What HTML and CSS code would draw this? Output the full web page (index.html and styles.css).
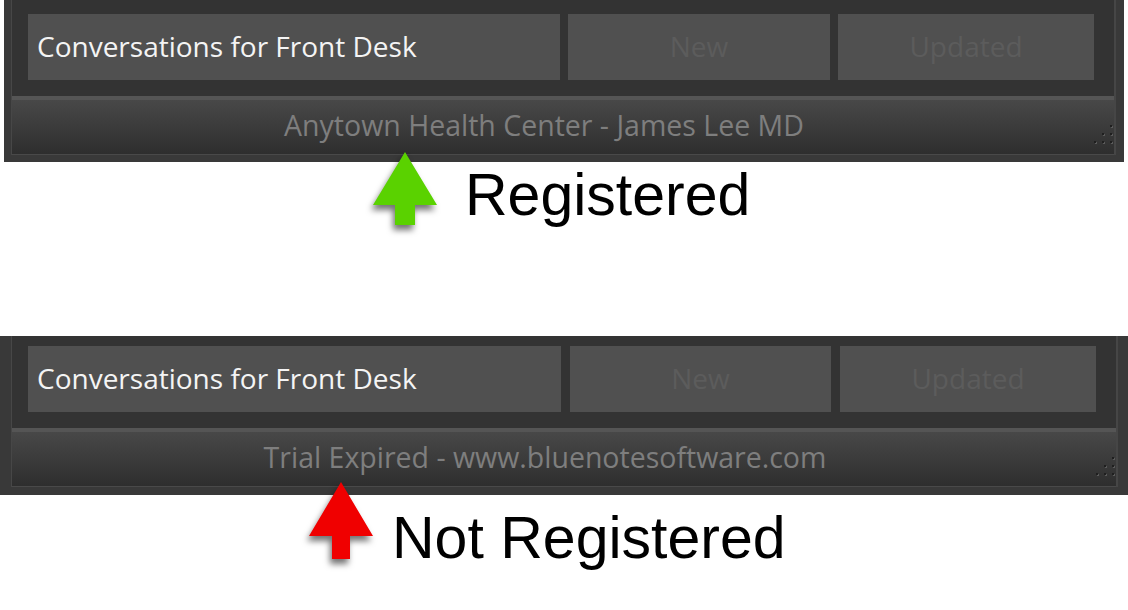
FILE: index.html
```html
<!DOCTYPE html>
<html lang="en">
<head>
    <meta charset="UTF-8">
    <title>Registration status</title>
    <link rel="stylesheet" href="styles.css">
</head>
<body>
<div class="panel panel-top">
    <div class="frame">
        <div class="tabs">
            <div class="tab tab-title">Conversations for Front Desk</div>
            <div class="tab tab-off">New</div>
            <div class="tab tab-off">Updated</div>
        </div>
        <div class="status">
            Anytown Health Center - James Lee MD
            <svg class="grip" width="19" height="19" viewBox="0 0 19 19">
                <g fill="#5a5a5a">
                    <rect x="17" y="1" width="2" height="2"/>
                    <rect x="9" y="9" width="2" height="2"/><rect x="17" y="9" width="2" height="2"/>
                    <rect x="1" y="17" width="2" height="2"/><rect x="9" y="17" width="2" height="2"/><rect x="17" y="17" width="2" height="2"/>
                </g>
                <g fill="#1f1f1f">
                    <rect x="16" y="0" width="2" height="2"/>
                    <rect x="8" y="8" width="2" height="2"/><rect x="16" y="8" width="2" height="2"/>
                    <rect x="0" y="16" width="2" height="2"/><rect x="8" y="16" width="2" height="2"/><rect x="16" y="16" width="2" height="2"/>
                </g>
            </svg>
        </div>
    </div>
</div>
<div class="note note-ok">
    <svg class="arrow" width="64" height="76" viewBox="0 0 64 76">
        <polygon points="32,0 64,53 42,53 42,73 22,73 22,53 0,53" fill="#5ad200"/>
    </svg>
    <span class="note-text">Registered</span>
</div>

<div class="panel panel-bottom">
    <div class="frame">
        <div class="tabs">
            <div class="tab tab-title">Conversations for Front Desk</div>
            <div class="tab tab-off">New</div>
            <div class="tab tab-off">Updated</div>
        </div>
        <div class="status">
            Trial Expired - www.bluenotesoftware.com
            <svg class="grip" width="19" height="19" viewBox="0 0 19 19">
                <g fill="#5a5a5a">
                    <rect x="17" y="1" width="2" height="2"/>
                    <rect x="9" y="9" width="2" height="2"/><rect x="17" y="9" width="2" height="2"/>
                    <rect x="1" y="17" width="2" height="2"/><rect x="9" y="17" width="2" height="2"/><rect x="17" y="17" width="2" height="2"/>
                </g>
                <g fill="#1f1f1f">
                    <rect x="16" y="0" width="2" height="2"/>
                    <rect x="8" y="8" width="2" height="2"/><rect x="16" y="8" width="2" height="2"/>
                    <rect x="0" y="16" width="2" height="2"/><rect x="8" y="16" width="2" height="2"/><rect x="16" y="16" width="2" height="2"/>
                </g>
            </svg>
        </div>
    </div>
</div>
<div class="note note-bad">
    <svg class="arrow" width="64" height="78" viewBox="0 0 64 78">
        <polygon points="32,0 64,54 41,54 41,77 23,77 23,54 0,54" fill="#f00000"/>
    </svg>
    <span class="note-text">Not Registered</span>
</div>
</body>
</html>
```

FILE: styles.css
```css
html,body{
    margin: 0;
    padding: 0;
    background: #ffffff;
}
body{
    width: 1128px;
    height: 610px;
    overflow: hidden;
}
*{
    box-sizing: border-box;
}
/* dark window strip */
.panel{
    background: #393939;
    position: relative;
    z-index: 1;
}
.panel-top{
    margin-left: 4px;
    width: 1120px;
    padding: 0 8px 7px 7px;
}
.panel-bottom{
    margin-top: 100px;
    width: 1128px;
    padding: 0 10px 8px 11px;
}
.frame{
    border-left: 1px solid #474747;
    border-right: 2px solid #464646;
    background: #333333;
}
.tabs{
    display: grid;
    grid-template-columns: 532px 262px 1fr;
    gap: 8px;
    padding: 14px 20px 16px 16px;
}
.panel-bottom .tabs{
    grid-template-columns: 533px 261px 1fr;
    gap: 9px;
    padding-top: 10px;
}
.tab{
    height: 66px;
    background: #505050;
    display: flex;
    align-items: center;
    padding-bottom: 2px;
    font-family: "Open Sans", "Noto Sans", sans-serif;
    font-size: 28px;
}
.tab-title{
    padding-left: 9px;
    color: #f4f4f4;
}
.tab-off{
    justify-content: center;
    color: #5c5c5c;
}
.status{
    position: relative;
    height: 59px;
    border-top: 4px solid #555555;
    border-bottom: 1px solid #494949;
    background: linear-gradient(#484848, #2e2e2e);
    display: flex;
    align-items: center;
    justify-content: center;
    padding: 0 38px 4px 0;
    font-family: "Open Sans", "Noto Sans", sans-serif;
    font-size: 28.5px;
    color: #7e7e7e;
}
.grip{
    position: absolute;
    right: 1px;
    bottom: 10px;
}
/* captions under each strip */
.note{
    display: flex;
    align-items: flex-start;
    position: relative;
    z-index: 2;
    font-family: "Liberation Sans", Arial, sans-serif;
    font-size: 59px;
    line-height: 59px;
    color: #000000;
}
.arrow{
    overflow: visible;
    flex: none;
    filter: drop-shadow(-2px 5px 3px rgba(0,0,0,0.55));
}
.note-ok{
    height: 84px;
    margin-top: -10px;
    padding-left: 373px;
    gap: 28px;
}
.note-ok .note-text{
    margin-top: 14px;
}
.note-bad{
    margin-top: -13px;
    padding-left: 309px;
    gap: 19px;
}
.note-bad .note-text{
    margin-top: 27px;
}
```
